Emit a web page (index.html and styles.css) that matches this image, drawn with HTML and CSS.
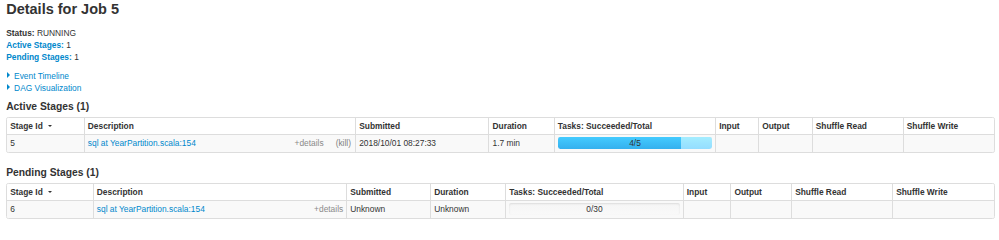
FILE: index.html
```html
<!DOCTYPE html>
<html lang="en">
<head>
<meta charset="utf-8">
<title>Details for Job 5</title>
<link rel="stylesheet" href="styles.css">
</head>
<body>
<div class="page">
  <h3 class="title">Details for Job 5</h3>
  <ul class="summary">
    <li><strong>Status:</strong> RUNNING</li>
    <li><a href="#active"><strong>Active Stages:</strong></a> 1</li>
    <li><a href="#pending"><strong>Pending Stages:</strong></a> 1</li>
  </ul>
  <div class="toggles">
    <div class="toggle"><span class="arrow"></span><a href="#timeline">Event Timeline</a></div>
    <div class="toggle"><span class="arrow"></span><a href="#dag">DAG Visualization</a></div>
  </div>

  <h4 class="section section-active" id="active">Active Stages (1)</h4>
  <table class="stages t-active">
    <thead>
      <tr>
        <th>Stage Id<span class="sort"></span></th>
        <th>Description</th>
        <th>Submitted</th>
        <th>Duration</th>
        <th>Tasks: Succeeded/Total</th>
        <th>Input</th>
        <th>Output</th>
        <th>Shuffle Read</th>
        <th>Shuffle Write</th>
      </tr>
    </thead>
    <tbody>
      <tr>
        <td>5</td>
        <td><a class="kill" href="#kill">(kill)</a><span class="details">+details</span><a href="#stage5">sql at YearPartition.scala:154</a></td>
        <td>2018/10/01 08:27:33</td>
        <td>1.7 min</td>
        <td>
          <div class="progress">
            <span class="label">4/5</span>
            <div class="bar bar-completed" style="width:80%"></div>
            <div class="bar bar-running" style="width:20%"></div>
          </div>
        </td>
        <td></td>
        <td></td>
        <td></td>
        <td></td>
      </tr>
    </tbody>
  </table>

  <h4 class="section section-pending" id="pending">Pending Stages (1)</h4>
  <table class="stages t-pending">
    <thead>
      <tr>
        <th>Stage Id<span class="sort"></span></th>
        <th>Description</th>
        <th>Submitted</th>
        <th>Duration</th>
        <th>Tasks: Succeeded/Total</th>
        <th>Input</th>
        <th>Output</th>
        <th>Shuffle Read</th>
        <th>Shuffle Write</th>
      </tr>
    </thead>
    <tbody>
      <tr>
        <td>6</td>
        <td><span class="details">+details</span><a href="#stage6">sql at YearPartition.scala:154</a></td>
        <td>Unknown</td>
        <td>Unknown</td>
        <td>
          <div class="progress">
            <span class="label">0/30</span>
          </div>
        </td>
        <td></td>
        <td></td>
        <td></td>
        <td></td>
      </tr>
    </tbody>
  </table>
</div>
</body>
</html>
```
FILE: styles.css
```css
* { box-sizing: border-box; }

html, body {
  margin: 0;
  padding: 0;
  background: #ffffff;
}

body {
  font-family: "Liberation Sans", Arial, Helvetica, sans-serif;
  font-size: 8.4px;
  color: #333333;
}

a {
  color: #0088cc;
  text-decoration: none;
}

.page {
  padding: 0 3.8px 0 6.2px;
}

.title {
  margin: 0.5px 0 0;
  font-size: 14.5px;
  line-height: 16px;
  font-weight: bold;
  color: #333333;
}

.summary {
  list-style: none;
  margin: 10.2px 0 0;
  padding: 0;
  line-height: 12px;
}

.summary strong {
  font-weight: bold;
}

.toggles {
  margin-top: 7.2px;
  line-height: 12px;
}

.arrow {
  display: inline-block;
  width: 0;
  height: 0;
  border-top: 3px solid transparent;
  border-bottom: 3px solid transparent;
  border-left: 3.2px solid #0088cc;
  margin: 0 4.4px 0.5px 0.5px;
}

.section {
  margin: 7.4px 0 3.4px;
  font-size: 10.3px;
  line-height: 12px;
  font-weight: bold;
  color: #333333;
}

.section-pending {
  margin-top: 14.6px;
}

.stages {
  width: 100%;
  table-layout: fixed;
  border-collapse: separate;
  border-spacing: 0;
  border: 1px solid #dddddd;
  border-radius: 2.4px;
}

.stages th,
.stages td {
  padding: 0 3px;
  text-align: left;
  vertical-align: middle;
  border-left: 1px solid #dddddd;
  white-space: nowrap;
  overflow: hidden;
}

.stages th:first-child,
.stages td:first-child {
  border-left: 0;
}

.stages th {
  font-weight: bold;
  line-height: 16.4px;
  background: #ffffff;
}

.stages td {
  border-top: 1px solid #dddddd;
  background: #f9f9f9;
  line-height: 16.6px;
}

.stages tbody tr:last-child td:first-child { border-bottom-left-radius: 1.4px; }
.stages tbody tr:last-child td:last-child { border-bottom-right-radius: 1.4px; }
.stages thead th:first-child { border-top-left-radius: 1.4px; }
.stages thead th:last-child { border-top-right-radius: 1.4px; }

/* column widths: active stages */
.t-active th:nth-child(1) { width: 76.6px; }
.t-active th:nth-child(2) { width: 271.4px; }
.t-active th:nth-child(3) { width: 133.3px; }
.t-active th:nth-child(4) { width: 65.3px; }
.t-active th:nth-child(5) { width: 161.4px; }
.t-active th:nth-child(6) { width: 43px; }
.t-active th:nth-child(7) { width: 53.6px; }
.t-active th:nth-child(8) { width: 91px; }
.t-active th:nth-child(9) { width: 91.4px; }

/* column widths: pending stages */
.t-pending th:nth-child(1) { width: 85.6px; }
.t-pending th:nth-child(2) { width: 253.4px; }
.t-pending th:nth-child(3) { width: 84px; }
.t-pending th:nth-child(4) { width: 75px; }
.t-pending th:nth-child(5) { width: 177.6px; }
.t-pending th:nth-child(6) { width: 47.7px; }
.t-pending th:nth-child(7) { width: 60.7px; }
.t-pending th:nth-child(8) { width: 101px; }
.t-pending th:nth-child(9) { width: 102px; }

.sort {
  display: inline-block;
  width: 0;
  height: 0;
  margin-left: 5px;
  border-left: 2px solid transparent;
  border-right: 2px solid transparent;
  border-top: 2.4px solid #333333;
  vertical-align: middle;
}

.kill {
  float: right;
  margin-left: 12px;
  margin-right: 1.2px;
  color: #808080;
}

.details {
  float: right;
  margin-left: 3px;
  color: #8a8a8a;
}

.progress {
  position: relative;
  display: flex;
  height: 12px;
  border-radius: 2.4px;
  overflow: hidden;
  background: linear-gradient(#f5f5f5, #f9f9f9);
  box-shadow: inset 0 1px 2px rgba(0, 0, 0, 0.1);
}

.progress .bar {
  height: 100%;
}

.bar-completed {
  background: linear-gradient(#44cbff, #34b0ee);
}

.bar-running {
  background: linear-gradient(#a4edff, #94ddff);
}

.progress .label {
  position: absolute;
  left: 0;
  right: 0;
  top: 0;
  line-height: 12px;
  text-align: center;
  color: #333333;
}
```
